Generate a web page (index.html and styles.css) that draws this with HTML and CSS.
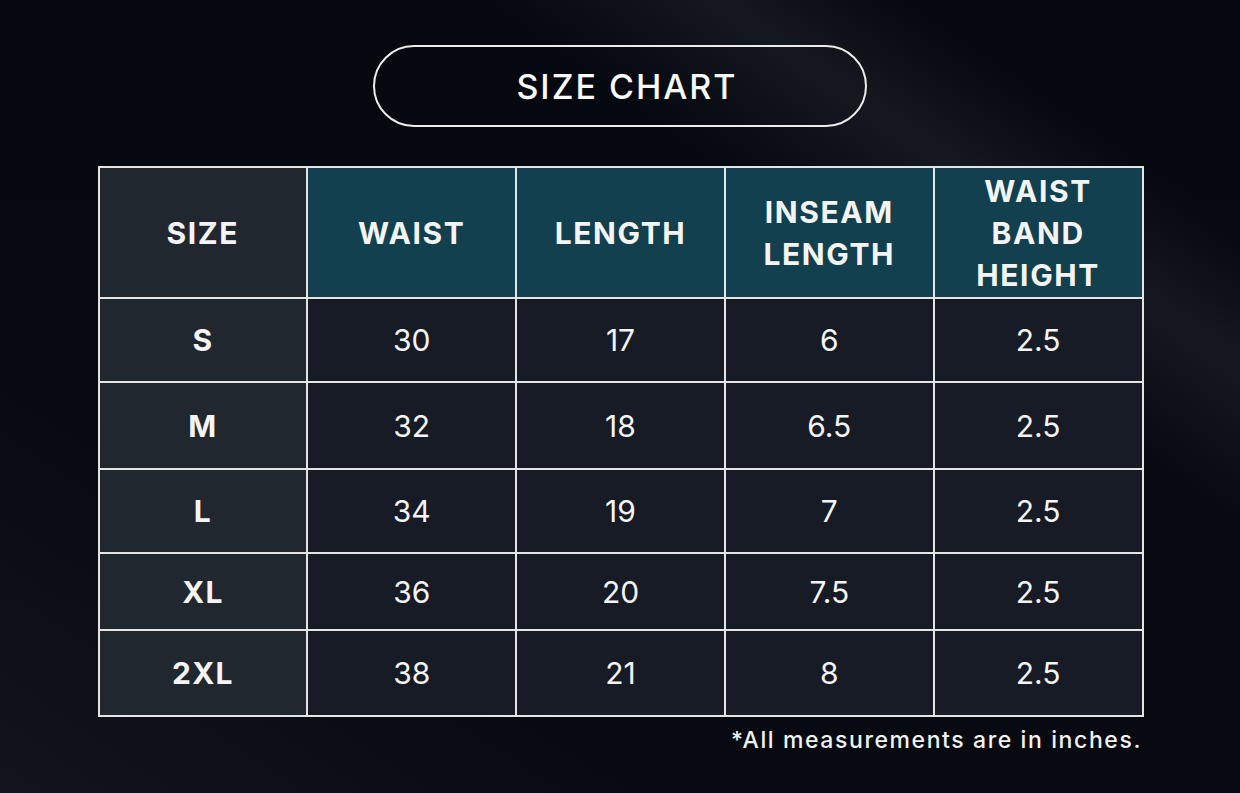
FILE: index.html
```html
<!DOCTYPE html>
<html lang="en">
<head>
<meta charset="utf-8">
<title>Size Chart</title>
<link rel="stylesheet" href="styles.css">
</head>
<body>
<main class="page">
  <div class="title-pill">SIZE CHART</div>
  <table class="chart">
    <thead>
      <tr class="row-head">
        <th class="c-size">SIZE</th>
        <th>WAIST</th>
        <th>LENGTH</th>
        <th>INSEAM<br>LENGTH</th>
        <th>WAIST<br>BAND<br>HEIGHT</th>
      </tr>
    </thead>
    <tbody>
      <tr class="r1"><th class="c-size">S</th><td>30</td><td>17</td><td>6</td><td>2.5</td></tr>
      <tr class="r2"><th class="c-size">M</th><td>32</td><td>18</td><td>6.5</td><td>2.5</td></tr>
      <tr class="r3"><th class="c-size">L</th><td>34</td><td>19</td><td>7</td><td>2.5</td></tr>
      <tr class="r4"><th class="c-size">XL</th><td>36</td><td>20</td><td>7.5</td><td>2.5</td></tr>
      <tr class="r5"><th class="c-size">2XL</th><td>38</td><td>21</td><td>8</td><td>2.5</td></tr>
    </tbody>
  </table>
  <p class="note">*All measurements are in inches.</p>
</main>
</body>
</html>
```

FILE: styles.css
```css
html, body {
  margin: 0;
  padding: 0;
}

body {
  width: 1240px;
  height: 793px;
  overflow: hidden;
  font-family: Inter, "Liberation Sans", sans-serif;
  color: #f4f4f4;
  background-color: #06090f;
  background-image:
    linear-gradient(215deg, rgba(0,0,0,0) 0%, rgba(0,0,0,0) 14%, rgba(36,40,48,0.5) 22%, rgba(0,0,0,0) 32%),
    linear-gradient(35deg, rgba(24,28,34,0.6) 0%, rgba(0,0,0,0) 28%),
    linear-gradient(180deg, #05080e 0%, #070a10 100%);
}

.page {
  display: flex;
  flex-direction: column;
  align-items: center;
  padding-top: 45px;
}

.title-pill {
  box-sizing: border-box;
  width: 494px;
  height: 82px;
  padding-left: 14px;
  border: 2px solid #ececec;
  border-radius: 41px;
  display: flex;
  align-items: center;
  justify-content: center;
  font-size: 34px;
  font-weight: 500;
  letter-spacing: 2px;
  color: #fafafa;
}

.chart {
  margin-top: 39px;
  border-collapse: collapse;
  width: 1046px;
  table-layout: fixed;
  margin-left: 1px;
}

.chart th,
.chart td {
  border: 2px solid #e4e4e4;
  text-align: center;
  vertical-align: middle;
  padding: 0;
  width: 20%;
}

.chart thead th {
  background: #12404e;
  font-size: 30px;
  font-weight: 700;
  letter-spacing: 1.6px;
  line-height: 42px;
}

.chart thead th.c-size {
  background: #21272e;
}

.chart tbody th.c-size {
  background: #21272e;
  font-size: 30px;
  font-weight: 700;
  letter-spacing: 1.2px;
}

.chart td {
  background: #161b25;
  font-size: 30px;
  font-weight: 400;
}

.row-head { height: 131px; }
.r1 { height: 84px; }
.r2 { height: 87px; }
.r3 { height: 84px; }
.r4 { height: 77px; }
.r5 { height: 86px; }

.note {
  align-self: flex-end;
  margin: 9px 98px 0 0;
  font-size: 23px;
  font-weight: 500;
  letter-spacing: 1.6px;
  color: #f2f2f2;
}
```
